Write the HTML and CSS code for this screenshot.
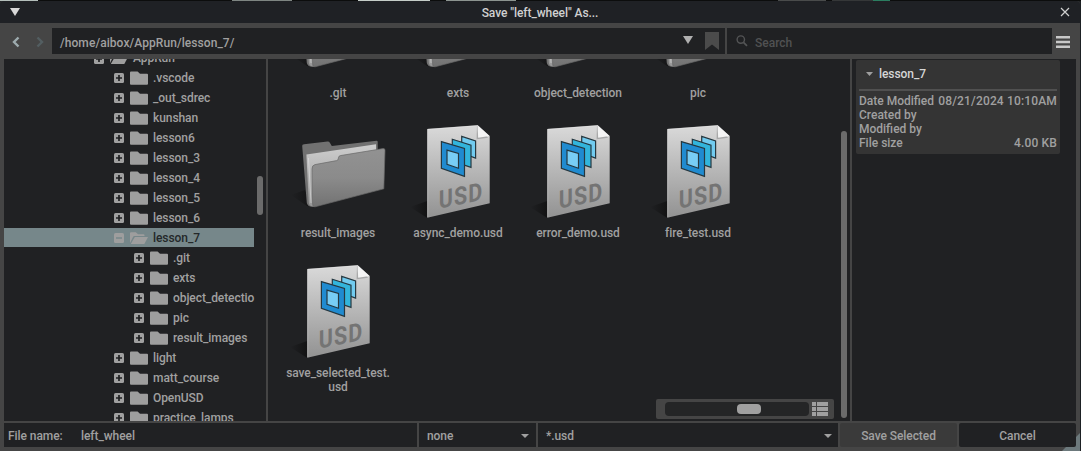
FILE: index.html
```html
<!DOCTYPE html>
<html lang="en">
<head>
<meta charset="utf-8">
<title>Save "left_wheel" As...</title>
<link rel="stylesheet" href="styles.css">
</head>
<body>
<svg class="defs" width="0" height="0">
  <defs>
    <linearGradient id="paper" x1="0" y1="0" x2="0" y2="1"><stop offset="0" stop-color="#dadada"/><stop offset="1" stop-color="#929292"/></linearGradient>
    <linearGradient id="front" x1="0" y1="0" x2="0" y2="1"><stop offset="0" stop-color="#929292"/><stop offset=".5" stop-color="#8b8b8b"/><stop offset="1" stop-color="#727272"/></linearGradient>
    <linearGradient id="sheet" x1="0" y1="0" x2="0" y2="1"><stop offset="0" stop-color="#cecece"/><stop offset="1" stop-color="#979797"/></linearGradient>
    <linearGradient id="shade" x1="0" y1="0" x2="1" y2="0"><stop offset="0" stop-color="#121213" stop-opacity="0"/><stop offset="1" stop-color="#121213"/></linearGradient>
    <symbol id="plus" viewBox="0 0 10 10"><rect width="10" height="10" rx="1.5" fill="#a0a0a0"/><path d="M5 2v6M2 5h6" stroke="#202123" stroke-width="1.7"/></symbol>
    <symbol id="minus" viewBox="0 0 10 10"><rect width="10" height="10" rx="1.5" fill="#9e9e9e"/><path d="M2 5h6" stroke="#76878a" stroke-width="1.4"/></symbol>
    <symbol id="folder" viewBox="0 0 18 14"><path d="M0 1.4Q0 .4 1 .4H7.6L10 2.8H17Q18 2.8 18 3.8V12.8Q18 13.8 17 13.8H1Q0 13.8 0 12.8Z" fill="#9e9e9e"/></symbol>
    <symbol id="folder-open" viewBox="0 0 18 14"><path d="M0 12V2.2Q0 1.2 1 1.2H5.8L8 3.2H13.5Q14.5 3.2 14.5 4.2V5H4.5Q3.4 5 3 6Z" fill="#9e9e9e"/><path d="M4.8 6H18L14.6 12.4Q14.2 13 13.5 13H.8Z" fill="#9e9e9e"/></symbol>
    <symbol id="big-folder" viewBox="0 0 120 110">
      <path d="M13 82L27 77 35 94 29 93Z" fill="url(#shade)"/>
      <path d="M24.2 33Q24 31.5 26 31.2L49.5 28.6Q51.3 28.5 52 30L53.8 33 98.5 27.7Q99.7 27.6 99.7 29V40L50 90 33 93.8Q29.5 93 28.8 90Z" fill="#717171"/>
      <path d="M28.4 41.5L98 31.2V42L36 93.8Q31.5 93.7 30.8 90Z" fill="url(#sheet)"/>
      <path d="M30.5 45L33 90" stroke="#ebebeb" stroke-width="1" opacity=".5"/>
      <path d="M34 56Q33.8 52.4 37 51.6L58.7 47.6Q60 47.4 60.2 46L60.6 44.2Q60.8 43 62.4 42.6L105 35.6Q107.2 35.3 107 37.5L105.8 75.8 37 93.8Q34.6 94.2 34.6 91Z" fill="url(#front)" stroke="#686868" stroke-width=".7"/>
    </symbol>
    <symbol id="usd" viewBox="0 0 120 110">
      <path d="M12 94L29.3 88V105Z" fill="url(#shade)"/>
      <path d="M29.3 16L79.8 12.3 91.7 23V90.2L29.3 104.7Z" fill="url(#paper)"/>
      <path d="M29.7 104.3V16.3L79.8 12.6" fill="none" stroke="#eee" stroke-width=".6" opacity=".7"/>
      <path d="M79 12.3L90 24.8 78.6 26.2Z" fill="#777" opacity=".45"/>
      <path d="M79.5 12.3L91.4 23 80.2 24.8Z" fill="#f4f4f4"/>
      <g stroke="#263840" stroke-width="1.2">
        <path d="M63.7 23.4L77.6 27.9V45.1L63.7 40Z" fill="#71cbef"/>
        <path d="M54.3 26.2L73 32.1V54.3L54.3 48Z" fill="#32b5dc"/>
        <path d="M43.4 28.6L66.5 35.5V63.4L43.4 55.3Z" fill="#208bd0"/>
        <path d="M49 37.1L60.5 40.4V55.2L49 51.4Z" fill="#78cdf5"/>
      </g>
      <text class="usd-mark" transform="matrix(.86 -.175 0 1 40.8 95.8)">USD</text>
    </symbol>
  </defs>
</svg>
<div class="backdrop"><i class="b1"></i><i class="b2"></i><i class="b3"></i><i class="b4"></i><i class="b5"></i><i class="b6"></i><i class="b7"></i></div>
<div class="window">
  <header class="titlebar">
    <svg class="collapse" width="10" height="8"><path d="M0 0H10L5 8Z" fill="#d8d8d8"/></svg>
    <span class="title">Save "left_wheel" As...</span>
    <svg class="close" width="10" height="10"><path d="M1 1L9 9M9 1L1 9" stroke="#d0d0d0" stroke-width="1.2"/></svg>
  </header>
  <div class="toolbar">
    <div class="nav">
      <svg width="8" height="12"><path d="M6.5 1.5L2 6L6.5 10.5" fill="none" stroke="#9dabae" stroke-width="2.4"/></svg>
      <svg width="8" height="12"><path d="M1.5 1.5L6 6L1.5 10.5" fill="none" stroke="#535e61" stroke-width="2.4"/></svg>
    </div>
    <div class="path">
      <span>/home/aibox/AppRun/lesson_7/</span>
      <svg class="drop" width="10" height="8"><path d="M0 0H10L5 8Z" fill="#b0b0b0"/></svg>
      <svg class="bookmark" width="14" height="18"><path d="M0 0H14V18L7 12.5 0 18Z" fill="#4b4b4b"/></svg>
    </div>
    <div class="search">
      <svg width="12" height="12"><circle cx="4.8" cy="4.6" r="3.7" fill="none" stroke="#535455" stroke-width="1.4"/><path d="M7.5 7.3L11 10.8" stroke="#535455" stroke-width="1.7"/></svg>
      <span>Search</span>
    </div>
    <svg class="menu" width="14" height="12"><path d="M0 1.3H14M0 6H14M0 10.7H14" stroke="#c8c8c8" stroke-width="2.5"/></svg>
  </div>
  <main class="panels">
    <section class="tree">
      <ul>
        <li class="up"><svg><use href="#plus"/></svg><svg><use href="#folder-open"/></svg><span>AppRun</span></li>
        <li><svg><use href="#plus"/></svg><svg><use href="#folder"/></svg><span>.vscode</span></li>
        <li><svg><use href="#plus"/></svg><svg><use href="#folder"/></svg><span>_out_sdrec</span></li>
        <li><svg><use href="#plus"/></svg><svg><use href="#folder"/></svg><span>kunshan</span></li>
        <li><svg><use href="#plus"/></svg><svg><use href="#folder"/></svg><span>lesson6</span></li>
        <li><svg><use href="#plus"/></svg><svg><use href="#folder"/></svg><span>lesson_3</span></li>
        <li><svg><use href="#plus"/></svg><svg><use href="#folder"/></svg><span>lesson_4</span></li>
        <li><svg><use href="#plus"/></svg><svg><use href="#folder"/></svg><span>lesson_5</span></li>
        <li><svg><use href="#plus"/></svg><svg><use href="#folder"/></svg><span>lesson_6</span></li>
        <li class="selected"><svg><use href="#minus"/></svg><svg><use href="#folder-open"/></svg><span>lesson_7</span></li>
        <li class="child"><svg><use href="#plus"/></svg><svg><use href="#folder"/></svg><span>.git</span></li>
        <li class="child"><svg><use href="#plus"/></svg><svg><use href="#folder"/></svg><span>exts</span></li>
        <li class="child"><svg><use href="#plus"/></svg><svg><use href="#folder"/></svg><span>object_detectio</span></li>
        <li class="child"><svg><use href="#plus"/></svg><svg><use href="#folder"/></svg><span>pic</span></li>
        <li class="child"><svg><use href="#plus"/></svg><svg><use href="#folder"/></svg><span>result_images</span></li>
        <li><svg><use href="#plus"/></svg><svg><use href="#folder"/></svg><span>light</span></li>
        <li><svg><use href="#plus"/></svg><svg><use href="#folder"/></svg><span>matt_course</span></li>
        <li><svg><use href="#plus"/></svg><svg><use href="#folder"/></svg><span>OpenUSD</span></li>
        <li><svg><use href="#plus"/></svg><svg><use href="#folder"/></svg><span>practice_lamps</span></li>
      </ul>
      <div class="tree-scroll"></div>
    </section>
    <section class="files">
      <div class="tiles">
        <figure><svg><use href="#big-folder"/></svg><figcaption>.git</figcaption></figure>
        <figure><svg><use href="#big-folder"/></svg><figcaption>exts</figcaption></figure>
        <figure><svg><use href="#big-folder"/></svg><figcaption>object_detection</figcaption></figure>
        <figure><svg><use href="#big-folder"/></svg><figcaption>pic</figcaption></figure>
        <figure><svg><use href="#big-folder"/></svg><figcaption>result_images</figcaption></figure>
        <figure><svg><use href="#usd"/></svg><figcaption>async_demo.usd</figcaption></figure>
        <figure><svg><use href="#usd"/></svg><figcaption>error_demo.usd</figcaption></figure>
        <figure><svg><use href="#usd"/></svg><figcaption>fire_test.usd</figcaption></figure>
        <figure><svg><use href="#usd"/></svg><figcaption>save_selected_test.<br>usd</figcaption></figure>
      </div>
      <div class="files-scroll"></div>
      <div class="zoom-bar">
        <div class="track"><div class="thumb"></div></div>
        <svg width="16" height="14"><path d="M0 0H4V4H0ZM5 0H16V4H5ZM0 5H4V9H0ZM5 5H16V9H5ZM0 10H4V14H0ZM5 10H16V14H5Z" fill="#a0a0a0"/></svg>
      </div>
    </section>
    <section class="details">
      <div class="card">
        <div class="card-head"><svg width="7" height="4"><path d="M0 0H7L3.5 4Z" fill="#9e9e9e"/></svg><span>lesson_7</span></div>
        <dl>
          <div><dt>Date Modified</dt><dd>08/21/2024 10:10AM</dd></div>
          <div><dt>Created by</dt><dd></dd></div>
          <div><dt>Modified by</dt><dd></dd></div>
          <div><dt>File size</dt><dd>4.00 KB</dd></div>
        </dl>
      </div>
    </section>
  </main>
  <footer class="bottom">
    <div class="filename"><label>File name:</label><span>left_wheel</span></div>
    <div class="combo"><span>none</span><svg width="8" height="4"><path d="M0 0H8L4 4Z" fill="#a0a0a0"/></svg></div>
    <div class="combo"><span>*.usd</span><svg width="8" height="4"><path d="M0 0H8L4 4Z" fill="#a0a0a0"/></svg></div>
    <div class="button save">Save Selected</div>
    <div class="button">Cancel</div>
  </footer>
  <svg class="grip" width="18" height="18"><path d="M18 0V18H0Z" fill="#6c797c"/></svg>
</div>
</body>
</html>
```
FILE: styles.css
```css
* { box-sizing: border-box; }
body {
  margin: 0;
  width: 1081px;
  height: 451px;
  overflow: hidden;
  background: #1d2124;
  color: #a0a0a0;
  font: 500 12px/14px Roboto, sans-serif;
  letter-spacing: -0.07px;
}
svg { display: block; flex: none; }
.defs { position: absolute; }
.usd-mark { font: 700 25px Roboto, sans-serif; letter-spacing: 1.2px; fill: #747474; }

.backdrop { display: flex; height: 1px; background: #0c0d0d; }
.backdrop i { display: block; height: 1px; }
.b1 { width: 38px; background: #b4bfbb; }
.b2 { width: 60px; margin-left: 194px; background: #7e8582; }
.b3 { width: 72px; margin-left: 66px; background: #c5cdc8; }
.b4 { width: 70px; margin-left: 16px; background: #8c9490; }
.b5 { width: 48px; margin-left: 262px; background: #494b4b; }
.b6 { width: 41px; margin-left: 6px; background: #353738; }
.b7 { width: 17px; background: #2b7d60; }

.window {
  position: relative;
  width: 1080px;
  height: 450px;
  background: #454545;
  border-radius: 3px 3px 0 0;
  overflow: hidden;
}
.titlebar {
  display: grid;
  grid-template-columns: 1fr auto 1fr;
  align-items: center;
  height: 22px;
  padding: 0 10px;
  background: #1f2125;
  color: #d0d0d0;
}
.close { justify-self: end; }
.title { padding-top: 2px; }

.toolbar { display: flex; align-items: center; height: 36px; }
.nav { display: flex; gap: 16px; width: 52px; padding: 1px 0 0 12px; }
.path, .search { display: flex; align-items: center; height: 26px; background: #202123; }
.path { width: 673px; padding: 0 6px 0 8px; }
.path span { flex: 1; padding-top: 3px; letter-spacing: 0.07px; }
.drop { margin-right: 12px; margin-bottom: 2px; }
.search { width: 325px; margin-left: 2px; padding-left: 9px; gap: 7px; color: #505152; }
.search span { padding-top: 3px; letter-spacing: 0; }
.search svg { margin-bottom: 1px; }
.menu { margin: 1px 0 0 4px; }

.panels { display: flex; gap: 2px; height: 362px; padding: 0 4px; }
.panels > section { background: #202123; overflow: hidden; }
.tree { display: flex; width: 262px; }
.tree ul { width: 250px; margin: -10px 0 0; padding: 0; list-style: none; flex: none; }
.tree li {
  display: flex;
  align-items: center;
  height: 19px;
  margin-bottom: 1px;
  padding-left: 110px;
  white-space: nowrap;
}
.tree li:first-child { height: 18px; }
.tree li svg:nth-child(1) { width: 10px; height: 10px; margin: 1px 6px 0 0; }
.tree li svg:nth-child(2) { width: 18px; height: 14px; margin: 0 5px 0 0; }
.tree .child { padding-left: 130px; }
.tree .up { padding-left: 90px; }
.tree .selected { background: #76878a; color: #242829; }
.tree-scroll { width: 6px; height: 39px; margin: 117px 0 0 3px; border-radius: 3px; background: #6b6b6b; }

.files { position: relative; display: flex; justify-content: space-between; width: 582px; padding: 0 3px 0 10px; }
.tiles { display: grid; grid-template-columns: repeat(4, 120px); grid-auto-rows: 140px; height: 420px; margin-top: -86px; }
.tiles figure { margin: 0; }
.tiles svg { width: 120px; height: 110px; }
.tiles figcaption { padding-top: 3px; text-align: center; }
.files-scroll { width: 6px; height: 287px; margin-top: 72px; border-radius: 3px; background: #6b6b6b; }
.zoom-bar {
  position: absolute;
  right: 16px;
  bottom: 2px;
  display: flex;
  align-items: center;
  gap: 3px;
  width: 178px;
  height: 20px;
  padding-left: 9px;
  border-radius: 2px;
  background: #454545;
}
.track { width: 144px; height: 14px; padding: 2px 0 0 72px; border-radius: 4px; background: #242526; }
.thumb { width: 24px; height: 10px; border-radius: 4px; background: #a0a0a0; }

.details { width: 224px; padding: 1px 0 0 4px; }
.card { width: 204px; height: 94px; padding: 0 3px; border-radius: 2px; background: #343434; }
.card-head { display: flex; align-items: center; gap: 6px; height: 29px; padding: 0 0 2px 7px; color: #d6d6d6; }
.card dl { margin: 0; padding-top: 3px; border-top: 2px solid #505050; }
.card dl div { display: flex; justify-content: space-between; height: 14px; }
.card dt, .card dd { margin: 0; white-space: nowrap; }
.card dt { letter-spacing: 0; }
.card dd { letter-spacing: 0.16px; }

.bottom { position: relative; z-index: 1; display: flex; gap: 2px; height: 26px; padding: 2px 4px 0; }
.bottom > div { display: flex; align-items: center; height: 24px; padding-top: 2px; background: #202123; }
.filename { width: 413px; padding-left: 4px; }
.filename label { width: 73px; }
.combo { justify-content: space-between; width: 117px; padding: 0 7px 0 8px; }
.combo + .combo { width: 300px; padding-right: 6px; }
.bottom .button { justify-content: center; width: 117px; border-radius: 2px; }
.bottom .save { background: #3a3a3a; }
.grip { position: absolute; right: 0; bottom: 0; }
```
